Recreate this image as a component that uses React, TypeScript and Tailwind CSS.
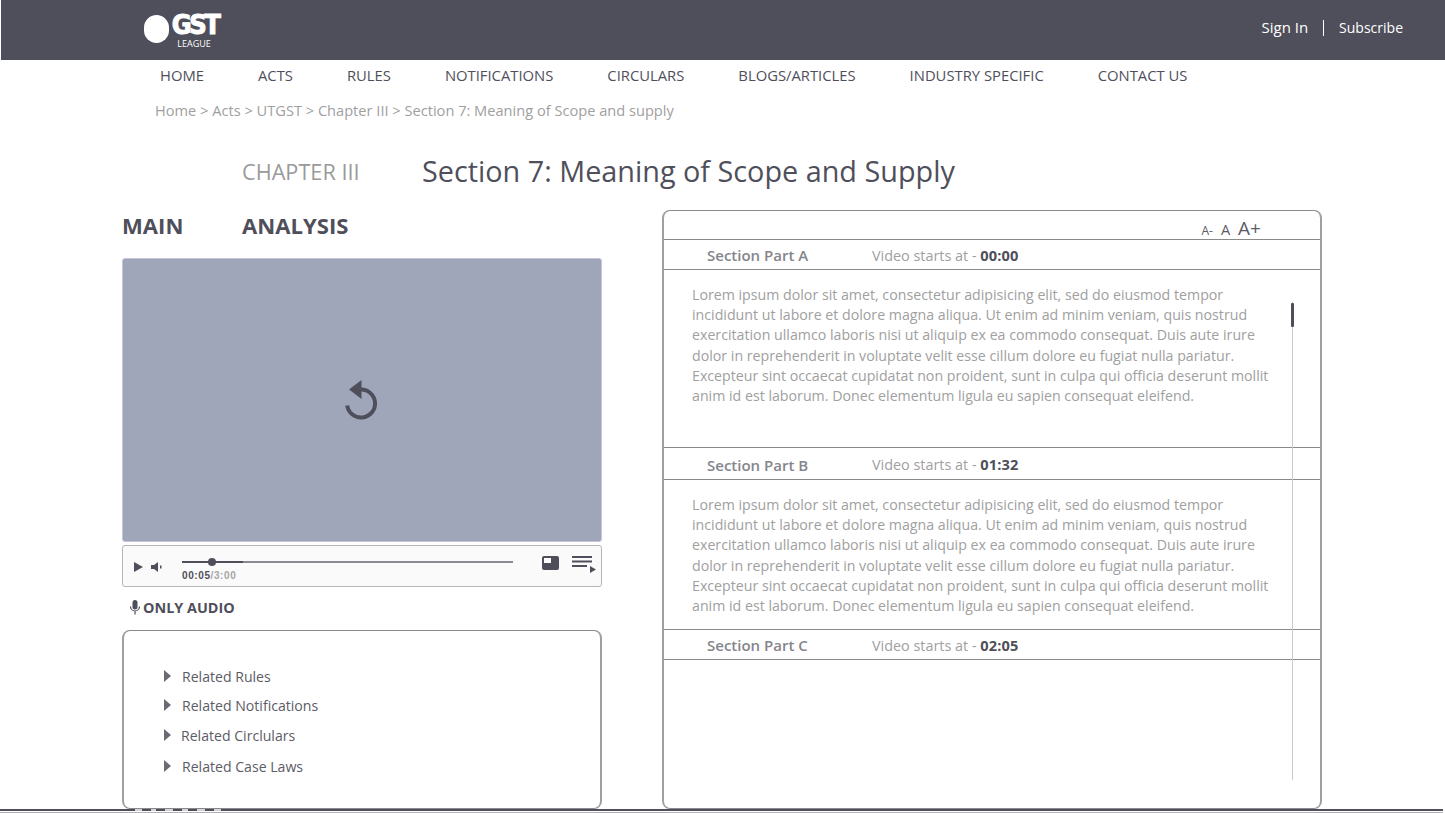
import React from "react";

const LOREM =
  "Lorem ipsum dolor sit amet, consectetur adipisicing elit, sed do eiusmod tempor incididunt ut labore et dolore magna aliqua. Ut enim ad minim veniam, quis nostrud exercitation ullamco laboris nisi ut aliquip ex ea commodo consequat. Duis aute irure dolor in reprehenderit in voluptate velit esse cillum dolore eu fugiat nulla pariatur. Excepteur sint occaecat cupidatat non proident, sunt in culpa qui officia deserunt mollit anim id est laborum. Donec elementum ligula eu sapien consequat eleifend.";

const NAV = ["HOME", "ACTS", "RULES", "NOTIFICATIONS", "CIRCULARS", "BLOGS/ARTICLES", "INDUSTRY SPECIFIC", "CONTACT US"];

function SectionHead({ name, time, h, pt }: { name: string; time: string; h: string; pt: string }) {
  return (
    <div className={`flex items-center ${h} ${pt} border-y border-[#8a8a8a] pl-[43px]`}>
      <span className="w-[165px] text-[15px] font-semibold text-[#85858c]">{name}</span>
      <span className="text-[14.4px] text-[#a0a0a0]">
        Video starts at - <span className="text-[14.6px] font-bold tracking-[0.1px] text-[#4f4f5b]">{time}</span>
      </span>
    </div>
  );
}

function Caret() {
  return (
    <svg width="7" height="12" viewBox="0 0 7 12" className="mb-[2px] shrink-0">
      <path d="M0 0L7 6L0 12Z" fill="#6a6a72" />
    </svg>
  );
}

const BOX = "rounded-[8px] border-x-2 border-y border-x-[#a0a0a0] border-y-[#8a8a8a]";

export default function App() {
  return (
    <div className="relative h-[813px] w-full overflow-hidden bg-white font-['Open_Sans',sans-serif] text-[#4f4f5b]">
      <header className="ml-px flex h-[60px] items-center justify-between bg-[#4f4f5b] pl-[143px] pr-[42px] text-white">
        <div className="flex items-start">
          <div className="mt-[4px] h-[28px] w-[25px] rounded-full bg-white" />
          <div className="ml-[1px] mt-[1px] flex w-[50px] flex-col items-center">
            <span className="font-['DejaVu_Sans',sans-serif] text-[27px] font-bold leading-[26px] tracking-[-2.5px] [-webkit-text-stroke:1px_white] [font-stretch:condensed]">GST</span>
            <span className="mr-[2px] text-[9px] leading-[11px]">LEAGUE</span>
          </div>
        </div>
        <div className="mb-[5px] flex items-center">
          <span className="text-[15px]">Sign In</span>
          <span className="mx-[15px] h-[16px] w-px bg-white" />
          <span className="text-[14px]">Subscribe</span>
        </div>
      </header>

      <nav className="flex h-[32px] items-center gap-[54px] pb-[2px] pl-[160px] text-[14.8px] text-[#4f4f5b]">
        {NAV.map((label) => (
          <span key={label}>{label}</span>
        ))}
      </nav>

      <div className="mt-[7px] pb-[2px] pl-[155px] text-[14.62px] leading-[22px] text-[#a0a0a0]">
        Home &gt; Acts &gt; UTGST &gt; Chapter III &gt; Section 7: Meaning of Scope and supply
      </div>

      <div className="mt-[27px] flex h-[44px] items-center pl-[242px]">
        <span className="w-[180px] text-[21.7px] text-[#9a9a9a]">CHAPTER III</span>
        <span className="pb-[2px] text-[28.8px] text-[#4f4f5b]">Section 7: Meaning of Scope and Supply</span>
      </div>

      <main className="mt-[16px] flex h-[599px] pl-[122px]">
        <section className="flex w-[480px] flex-col">
          <div className="flex h-[32px] items-center text-[22.1px] font-bold">
            <span className="w-[120px]">MAIN</span>
            <span>ANALYSIS</span>
          </div>
          <div className="mt-[16px] flex h-[284px] items-center justify-center rounded-[3px] border border-[#c3c6d2] bg-[#a0a6b9]">
            <svg width="36" height="42" viewBox="0 0 36 42" fill="none" className="mr-[3px]">
              <path d="M18 10.5A14 14 0 1 1 4.2 26.5" stroke="#4f4f5b" strokeWidth="4" />
              <path d="M18.5 1L18.5 20L6 10.5Z" fill="#4f4f5b" />
            </svg>
          </div>
          <div className="mt-[3px] flex h-[42px] items-center rounded-[3px] border border-[#b5b5b5] bg-[#fafafa] pl-[11px] pr-[5px]">
            <svg width="9" height="10" viewBox="0 0 9 10" className="mt-[2px] shrink-0">
              <path d="M0 0L9 5L0 10Z" fill="#4f4f5b" />
            </svg>
            <svg width="11" height="10" viewBox="0 0 11 10" className="ml-[8px] mt-[2px] shrink-0">
              <path d="M0 3H3L7 0V10L3 7H0Z M9 3.5H10.5V6.5H9Z" fill="#4f4f5b" />
            </svg>
            <div className="ml-[20px] mt-[11px] w-[331px]">
              <div className="relative h-[2px] bg-[#8a8a90]">
                <div className="h-[2px] w-[61px] bg-[#4f4f5b]" />
                <div className="absolute left-[26px] top-[-3px] h-[8px] w-[8px] rounded-full bg-[#4f4f5b]" />
              </div>
              <div className="mt-[6px] font-['Liberation_Sans',sans-serif] text-[10px] font-bold leading-[14px] tracking-[0.6px] text-[#4f4f5b]">
                00:05<span className="text-[#a5a5a5]">/3:00</span>
              </div>
            </div>
            <div className="mb-[4px] ml-auto flex items-start">
              <svg width="17" height="14" viewBox="0 0 17 14">
                <rect width="17" height="14" rx="2" fill="#4f4f5b" />
                <rect x="2" y="2" width="7" height="5" fill="#fff" />
              </svg>
              <svg width="24" height="17" viewBox="0 0 24 17" className="ml-[13px]">
                <path d="M0 0H20V2H0Z M0 4.5H20V6.5H0Z M0 9H15V11H0Z" fill="#4f4f5b" />
                <path d="M18 10L24 13.5L18 17Z" fill="#4f4f5b" />
              </svg>
            </div>
          </div>
          <div className="mt-[10px] flex h-[22px] items-center pl-[7px] text-[14.4px] font-bold">
            <svg width="12" height="15" viewBox="0 0 12 15" className="mb-[2px] mr-[2px]">
              <rect x="3.5" y="0" width="5" height="9.5" rx="2.5" fill="#4f4f5b" />
              <path d="M1.5 6.5A4.5 4.5 0 0 0 10.5 6.5 M6 11V14.5" stroke="#4f4f5b" strokeWidth="1.2" fill="none" />
            </svg>
            ONLY AUDIO
          </div>
          <div className={`mt-[11px] flex h-[179px] flex-col ${BOX} pl-[40px] pt-[31px] text-[14.1px] leading-[20px] text-[#5c5c66]`}>
            <div className="flex h-[29px] items-center gap-[11px]"><Caret />Related Rules</div>
            <div className="flex h-[30px] items-center gap-[11px]"><Caret />Related Notifications</div>
            <div className="flex h-[30px] items-center gap-[10px]"><Caret />Related Circlulars</div>
            <div className="flex h-[31px] items-center gap-[11px]"><Caret />Related Case Laws</div>
          </div>
        </section>

        <section className={`relative ml-[60px] flex h-[599px] w-[660px] flex-col ${BOX}`}>
          <div className="flex h-[28px] items-end justify-end gap-[8px] pr-[59px] text-[#5c5c66]">
            <span className="text-[12px] leading-[16px]">A-</span>
            <span className="text-[14.5px] leading-[18px]">A</span>
            <span className="text-[19px] leading-[21px]">A+</span>
          </div>
          <SectionHead name="Section Part A" time="00:00" h="h-[31px]" pt="pt-[2px]" />
          <p className="h-[177px] pl-[28px] pr-[49px] pt-[15px] text-[14.2px] leading-[20.2px] text-[#a0a0a0]">{LOREM}</p>
          <SectionHead name="Section Part B" time="01:32" h="h-[33px]" pt="pt-[3px]" />
          <p className="h-[149px] pl-[28px] pr-[49px] pt-[15px] text-[14.2px] leading-[20.2px] text-[#a0a0a0]">{LOREM}</p>
          <SectionHead name="Section Part C" time="02:05" h="h-[31px]" pt="pt-[2px]" />
          <div className="absolute left-[628px] top-[91px] h-[478px] w-px bg-[#c9c9c9]" />
          <div className="absolute left-[627px] top-[92px] h-[24px] w-[3px] rounded-[1px] bg-[#4f4f5b]" />
        </section>
      </main>

      <div className="relative mr-[2px] h-[2px] bg-[#4f4f5b]">
        <div className="absolute left-[135px] top-0 flex h-[2px] gap-[9px]">
          <span className="w-[7px] bg-[#d5d5d8]" />
          <span className="w-[5px] bg-[#d5d5d8]" />
          <span className="w-[8px] bg-[#d5d5d8]" />
          <span className="w-[6px] bg-[#d5d5d8]" />
          <span className="w-[8px] bg-[#d5d5d8]" />
          <span className="w-[7px] bg-[#d5d5d8]" />
        </div>
      </div>
      <div className="mr-[2px] mt-px h-px bg-[#b0b0b5]" />
    </div>
  );
}
